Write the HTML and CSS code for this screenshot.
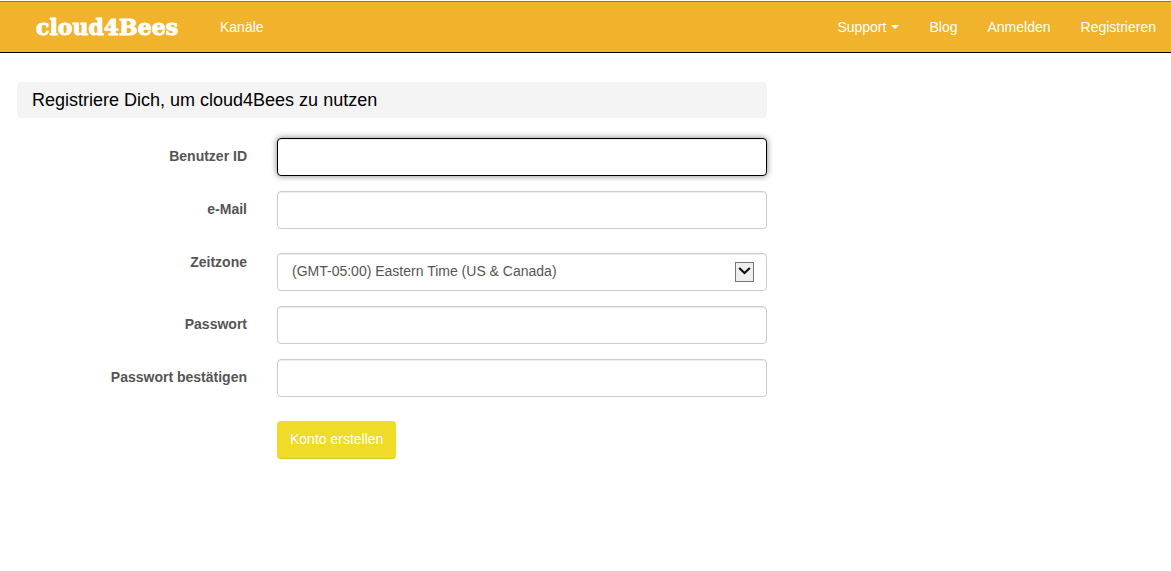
FILE: index.html
```html
<!DOCTYPE html>
<html lang="de">
<head>
<meta charset="utf-8">
<meta name="viewport" content="width=device-width, initial-scale=1">
<title>cloud4Bees</title>
<link rel="stylesheet" href="styles.css">
</head>
<body>
<header class="navbar">
  <a class="brand" href="#">cloud4Bees</a>
  <nav class="nav">
    <a class="nav-link" href="#">Kanäle</a>
    <div class="nav-right">
      <a class="nav-link" href="#">Support<span class="caret"></span></a>
      <a class="nav-link" href="#">Blog</a>
      <a class="nav-link" href="#">Anmelden</a>
      <a class="nav-link" href="#">Registrieren</a>
    </div>
  </nav>
</header>
<main class="content">
  <h1 class="title">Registriere Dich, um cloud4Bees zu nutzen</h1>
  <form class="form">
    <div class="row">
      <label class="label" for="user">Benutzer ID</label>
      <input class="control" id="user" type="text" autofocus>
    </div>
    <div class="row">
      <label class="label" for="email">e-Mail</label>
      <input class="control" id="email" type="email">
    </div>
    <div class="row">
      <label class="label" for="zone">Zeitzone</label>
      <div class="select-wrap">
        <select class="control select" id="zone">
          <option>(GMT-05:00) Eastern Time (US &amp; Canada)</option>
        </select>
        <span class="select-button" aria-hidden="true">
          <svg width="13" height="9" viewBox="0 0 13 9"><path d="M1.2 1 6.5 6 11.8 1" fill="none" stroke="#111" stroke-width="2.2"/></svg>
        </span>
      </div>
    </div>
    <div class="row">
      <label class="label" for="pass">Passwort</label>
      <input class="control" id="pass" type="password">
    </div>
    <div class="row">
      <label class="label" for="confirm">Passwort bestätigen</label>
      <input class="control" id="confirm" type="password">
    </div>
    <div class="row">
      <button class="submit" type="submit">Konto erstellen</button>
    </div>
  </form>
</main>
</body>
</html>
```
FILE: styles.css
```css
* {
  box-sizing: border-box;
}

body {
  margin: 0;
  padding-top: 1px;
  background: #fff;
  color: #555;
  font-family: "Liberation Sans", Arial, sans-serif;
  font-size: 14px;
  line-height: 20px;
}

.navbar {
  display: flex;
  align-items: center;
  height: 52px;
  padding-left: 36px;
  background: #f0b32b;
  border-top: 1px solid #7d7660;
  border-bottom: 1px solid #000;
}

.brand {
  width: 169px;
  color: #fff;
  font-family: "Cooper Black", "DejaVu Serif", serif;
  font-size: 22px;
  font-weight: 700;
  line-height: 24px;
  text-decoration: none;
  -webkit-text-stroke: 1px #fff;
}

.nav,
.nav-right {
  display: flex;
}

.nav {
  flex: 1;
  justify-content: space-between;
}

.nav-link {
  display: flex;
  align-items: center;
  padding: 15px;
  color: #fff;
  text-decoration: none;
}

.caret {
  margin-left: 5px;
  border-top: 4px solid #fff;
  border-right: 4px solid transparent;
  border-left: 4px solid transparent;
}

.content {
  max-width: 784px;
  padding: 29px 17px;
}

.title {
  margin: 0 0 20px;
  padding: 8px 15px;
  border-radius: 4px;
  background: #f4f4f4;
  color: #000;
  font-size: 18px;
  font-weight: 400;
  line-height: 20px;
}

.form {
  display: grid;
  gap: 15px;
}

.row {
  display: grid;
  grid-template-columns: 230px 1fr;
  column-gap: 30px;
}

.label {
  padding-top: 8px;
  font-weight: 700;
  text-align: right;
}

.control {
  display: block;
  width: 100%;
  height: 38px;
  padding: 8px 12px;
  border: 1px solid #ccc;
  border-radius: 4px;
  outline: 0;
  background: #fff;
  box-shadow: inset 0 1px 1px rgba(0, 0, 0, 0.075);
  color: #555;
  font: inherit;
}

.control:focus {
  border-color: #000;
  box-shadow: inset 0 1px 1px rgba(0, 0, 0, 0.075), 0 0 6px rgba(0, 0, 0, 0.5);
}

.select-wrap {
  position: relative;
  margin-top: 9px;
}

.select {
  appearance: none;
  padding: 7px 40px 9px 14px;
}

.select-button {
  position: absolute;
  top: 9px;
  right: 13px;
  display: flex;
  justify-content: center;
  width: 19px;
  height: 20px;
  padding-top: 4px;
  border: 1px solid #777;
  background: #eee;
  pointer-events: none;
}

.submit {
  grid-column: 2;
  justify-self: start;
  height: 38px;
  margin-top: 9px;
  padding: 0 13px 1px;
  border: 0;
  border-bottom: 1px solid #dcc724;
  border-radius: 4px;
  background: #eedc28;
  color: #fff;
  font: inherit;
}
```
